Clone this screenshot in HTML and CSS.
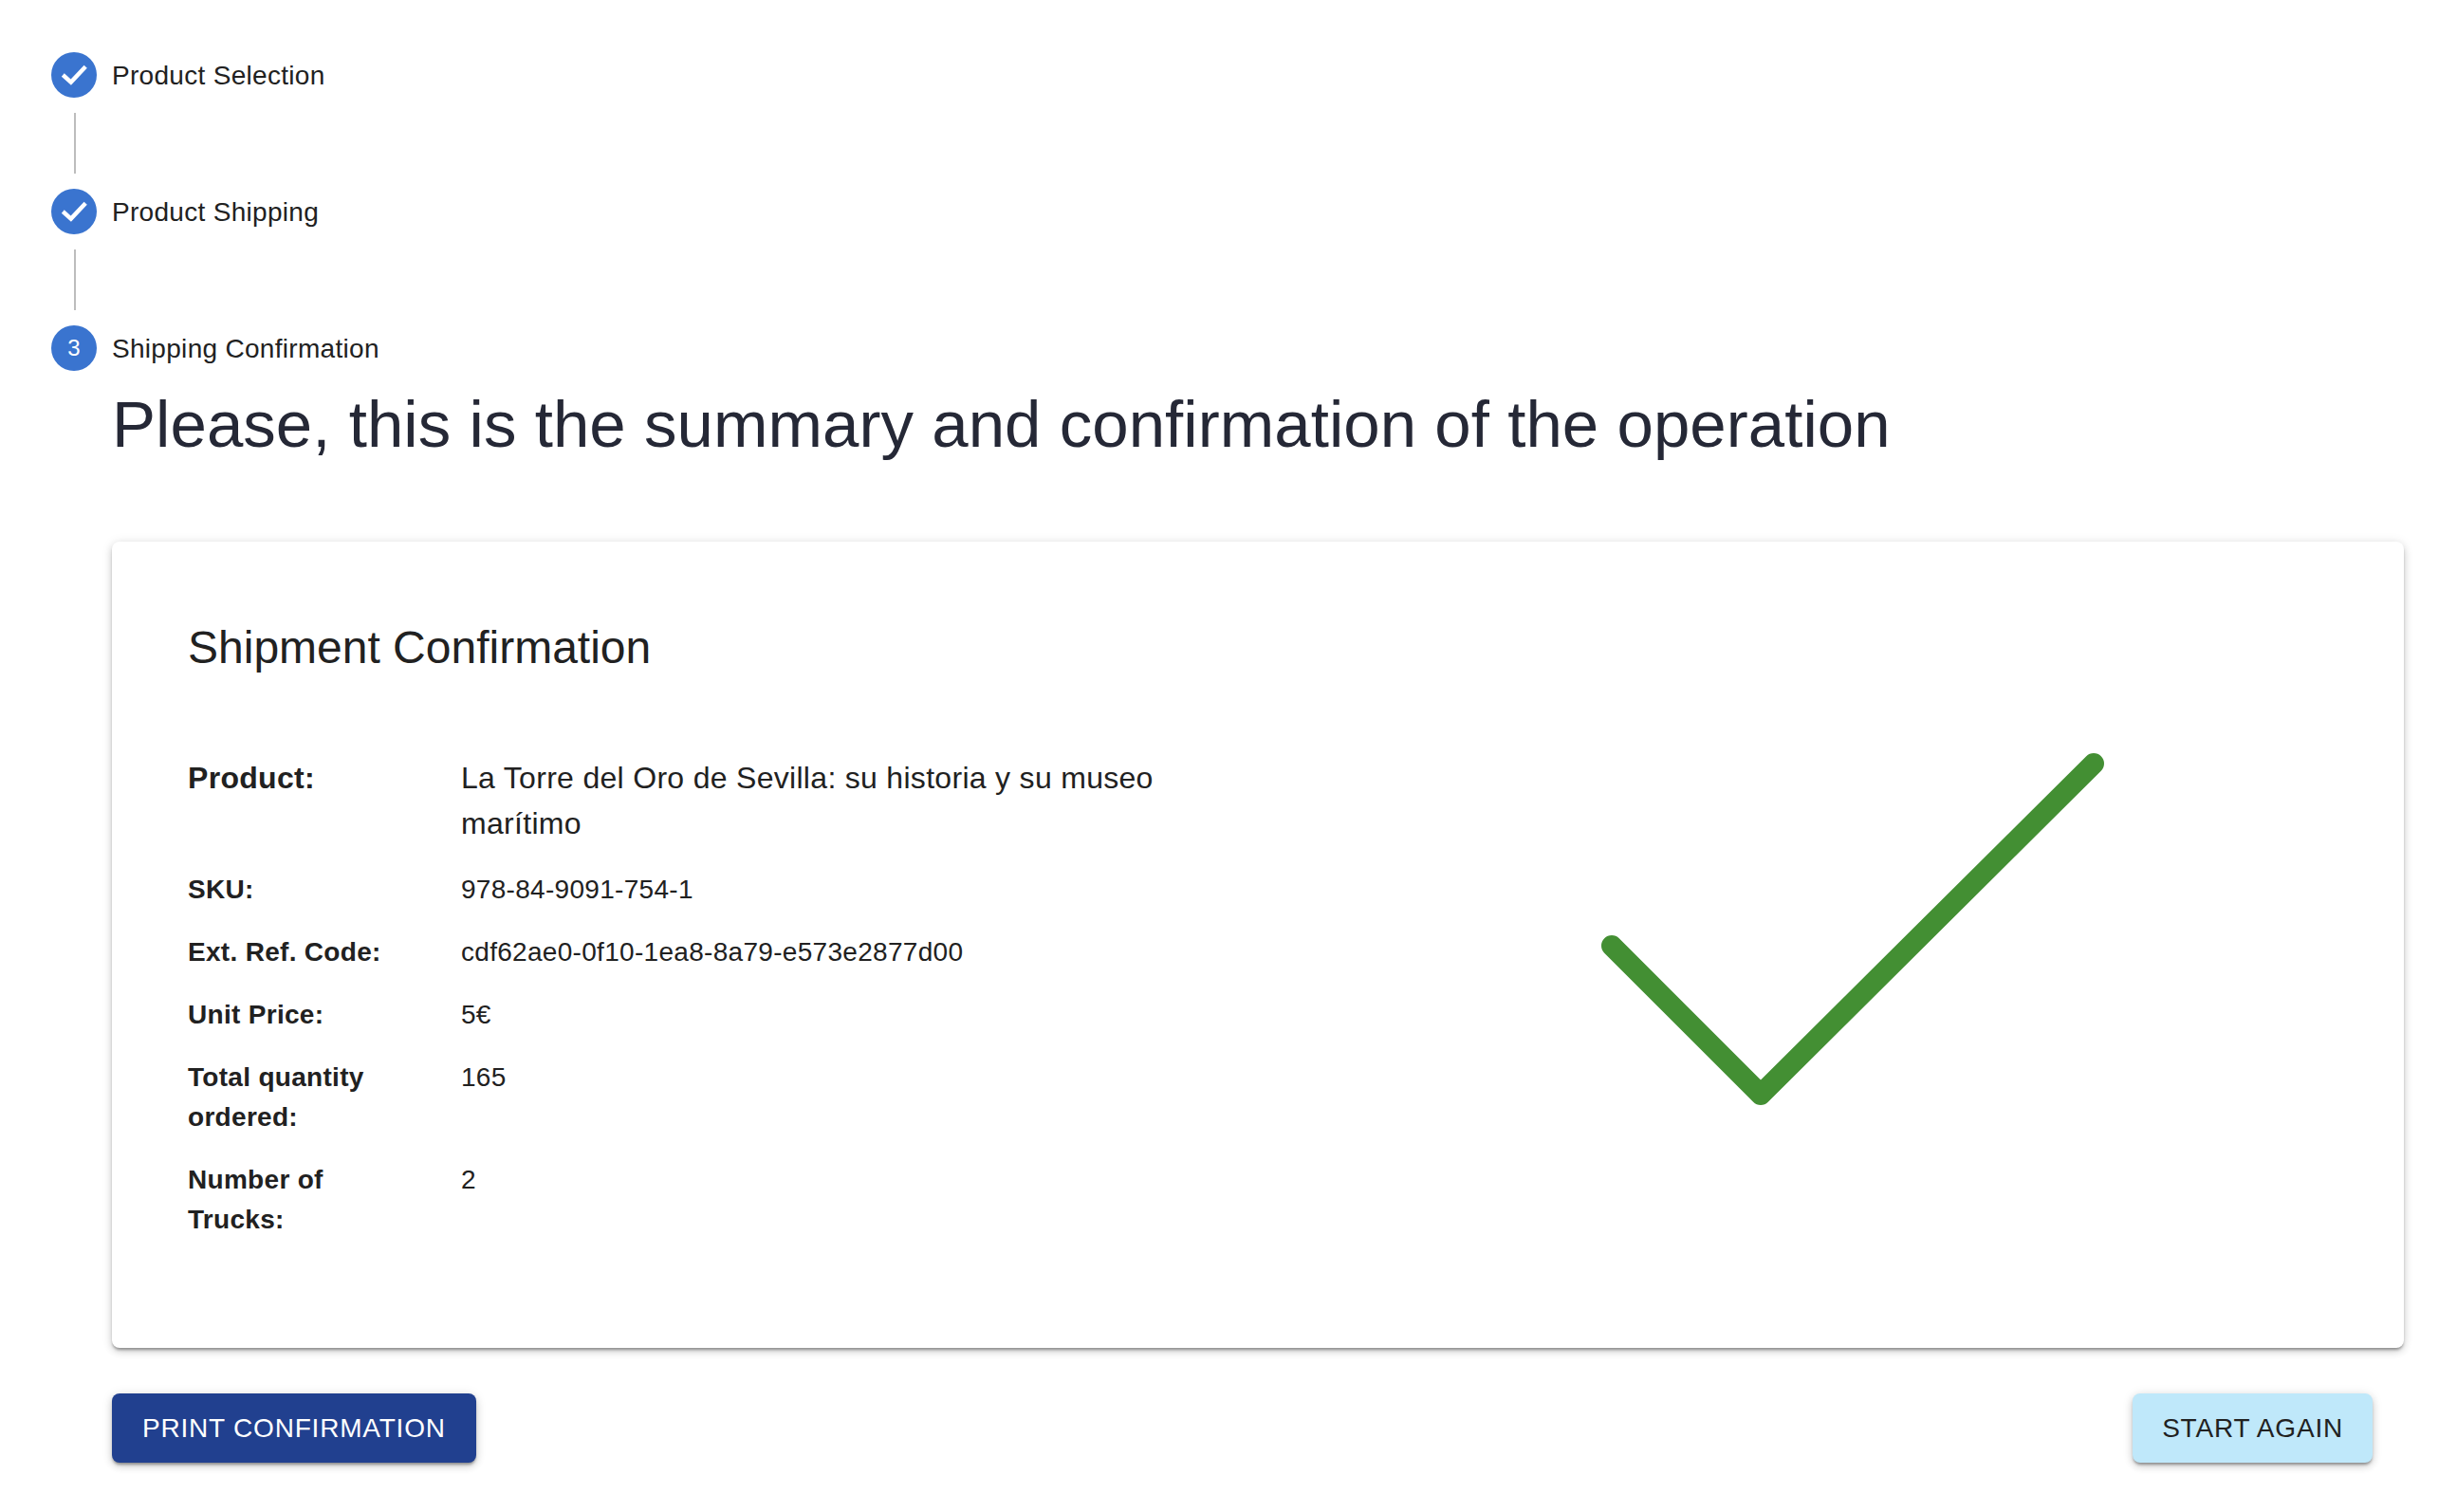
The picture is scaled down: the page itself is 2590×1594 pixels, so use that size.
FILE: index.html
```html
<!DOCTYPE html>
<html lang="en">
<head>
  <meta charset="UTF-8" />
  <title>Shipping Confirmation</title>
  <link rel="stylesheet" href="styles.css">
</head>
<body>
  <div class="stepper">
    <div class="step">
      <span class="step-icon">
        <svg viewBox="0 0 48 48" width="48" height="48"><path d="M12.3 24 L20.8 31.6 L36.2 15.2" fill="none" stroke="#fff" stroke-width="4.4"/></svg>
      </span>
      <span class="step-label">Product Selection</span>
    </div>
    <div class="connector"></div>
    <div class="step">
      <span class="step-icon">
        <svg viewBox="0 0 48 48" width="48" height="48"><path d="M12.3 24 L20.8 31.6 L36.2 15.2" fill="none" stroke="#fff" stroke-width="4.4"/></svg>
      </span>
      <span class="step-label">Product Shipping</span>
    </div>
    <div class="connector"></div>
    <div class="step">
      <span class="step-icon">3</span>
      <span class="step-label">Shipping Confirmation</span>
    </div>
  </div>

  <main class="content">
    <h1 class="page-title">Please, this is the summary and confirmation of the operation</h1>

    <section class="card">
      <div class="details">
        <h2 class="card-title">Shipment Confirmation</h2>
        <div class="row row-large">
          <div class="row-label">Product:</div>
          <div class="row-value">La Torre del Oro de Sevilla: su historia y su museo marítimo</div>
        </div>
        <div class="row">
          <div class="row-label">SKU:</div>
          <div class="row-value">978-84-9091-754-1</div>
        </div>
        <div class="row">
          <div class="row-label">Ext. Ref. Code:</div>
          <div class="row-value">cdf62ae0-0f10-1ea8-8a79-e573e2877d00</div>
        </div>
        <div class="row">
          <div class="row-label">Unit Price:</div>
          <div class="row-value">5€</div>
        </div>
        <div class="row">
          <div class="row-label">Total quantity ordered:</div>
          <div class="row-value">165</div>
        </div>
        <div class="row">
          <div class="row-label">Number of Trucks:</div>
          <div class="row-value">2</div>
        </div>
      </div>
      <div class="tick">
        <svg viewBox="0 0 530 372" width="530" height="372"><path d="M11 203 L168 360 L519 11" fill="none" stroke="#438f33" stroke-width="22" stroke-linecap="round" stroke-linejoin="round"/></svg>
      </div>
    </section>

    <div class="actions">
      <button class="btn btn-primary">Print confirmation</button>
      <button class="btn btn-light">Start again</button>
    </div>
  </main>
</body>
</html>
```
FILE: styles.css
```css
html, body {
  margin: 0;
  padding: 0;
  background: #fff;
  color: #212121;
  font-family: "Liberation Sans", Arial, sans-serif;
}

.stepper {
  padding: 55px 0 0 54px;
}

.step {
  display: flex;
  align-items: center;
  gap: 16px;
  height: 48px;
}

.step-icon {
  width: 48px;
  height: 48px;
  border-radius: 50%;
  background: #3a74cf;
  color: #fff;
  font-size: 24px;
  display: flex;
  align-items: center;
  justify-content: center;
}

.step-label {
  padding-top: 2px;
  font-size: 28px;
  letter-spacing: 0.3px;
}

.connector {
  width: 2px;
  height: 64px;
  margin: 16px 0 16px 24px;
  background: #bdbdbd;
}

.content {
  padding: 0 56px 40px 118px;
}

.page-title {
  margin: 0;
  padding: 14px 0 80px;
  font-size: 69px;
  line-height: 86px;
  font-weight: 400;
  letter-spacing: 0.05px;
  color: #252836;
}

.card {
  display: grid;
  grid-template-columns: 1040px 1fr;
  height: 850px;
  padding: 80px;
  box-sizing: border-box;
  background: #fff;
  border-radius: 8px;
  box-shadow: 0 3px 3px -1px rgba(0,0,0,.35), 0 4px 8px rgba(0,0,0,.14), 0 1px 12px rgba(0,0,0,.1);
}

.card-title {
  margin: 0;
  padding-bottom: 81px;
  font-size: 48px;
  line-height: 64px;
  font-weight: 400;
}

.row {
  display: grid;
  grid-template-columns: 288px 1fr;
  padding-bottom: 24px;
  font-size: 28px;
  line-height: 42px;
  letter-spacing: 0.3px;
}

.row-large {
  padding-bottom: 25px;
  font-size: 32px;
  line-height: 48px;
}

.row-label {
  font-weight: 700;
  padding-right: 48px;
}

.tick {
  display: flex;
  justify-content: flex-end;
  padding: 143px 236px 0 0;
}

.actions {
  display: flex;
  justify-content: space-between;
  padding: 48px 33px 0 0;
}

.btn {
  height: 73px;
  padding: 0 32px;
  border: none;
  border-radius: 8px;
  font-family: inherit;
  font-size: 28px;
  letter-spacing: 0.8px;
  text-transform: uppercase;
  box-shadow: 0 3px 3px -1px rgba(0,0,0,.35), 0 4px 8px rgba(0,0,0,.14), 0 1px 12px rgba(0,0,0,.1);
}

.btn-primary {
  background: #21408f;
  color: #fff;
}

.btn-light {
  padding: 0 31px;
  background: #bfe8fa;
  color: #212121;
}
```
